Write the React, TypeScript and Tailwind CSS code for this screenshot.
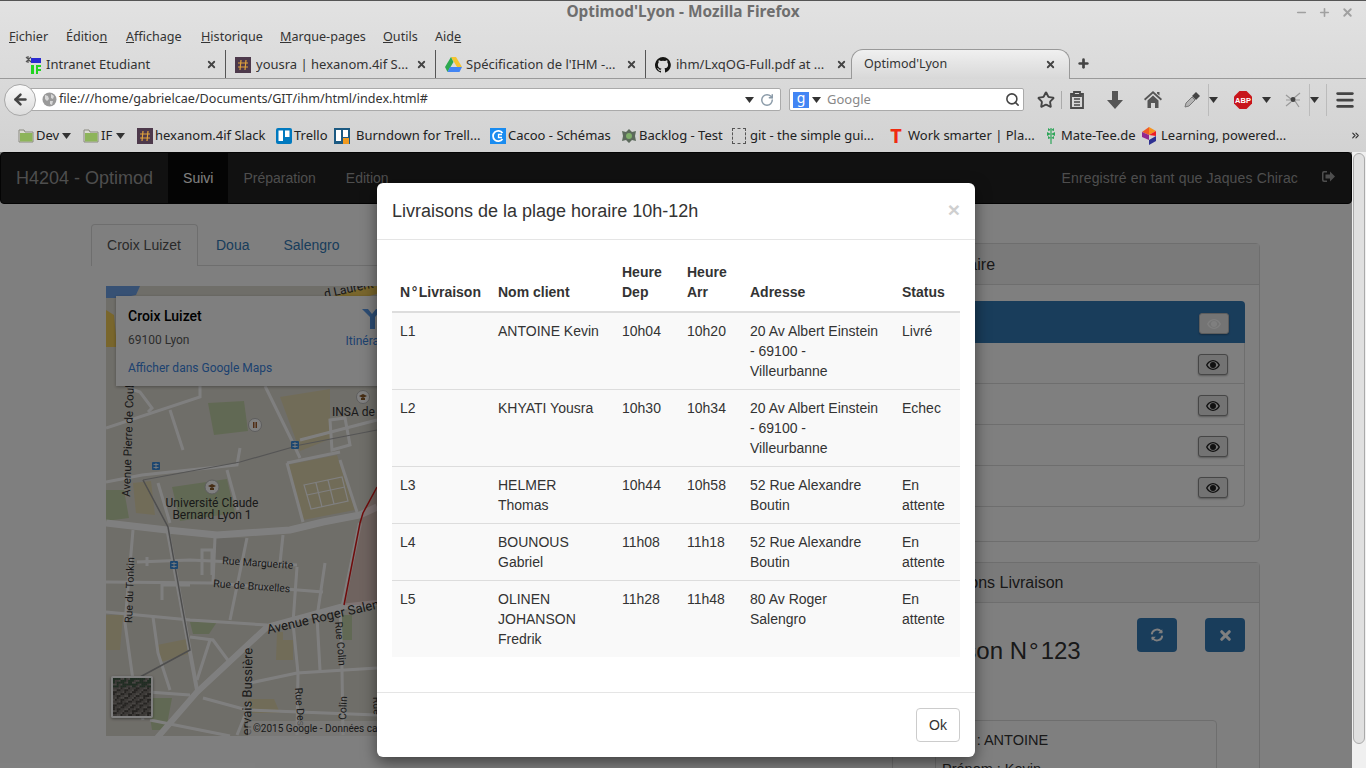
import { Search, Star, Plus, X, Minus, ArrowLeft, RotateCw, Menu, ChevronsRight } from 'lucide-react';

const chromeFont = "font-['Noto_Sans','Open_Sans',sans-serif]";

// ---- little drawn icons ----
function Caret({ className = 'text-[#333]' }: { className?: string }) {
  return (
    <svg width="9" height="6" viewBox="0 0 9 6" className={`shrink-0 ${className}`}>
      <path d="M0 0h9L4.5 6z" fill="currentColor" />
    </svg>
  );
}

function Hash({ size = 16 }: { size?: number }) {
  return (
    <svg width={size} height={size} viewBox="0 0 16 16" className="shrink-0">
      <rect width="16" height="16" fill="#4d394b" />
      <path d="M6 3 5 13M11 3l-1 10M3 6h10M3 10h10" stroke="#e0a23c" strokeWidth="1.2" />
    </svg>
  );
}

function Folder() {
  return (
    <svg width="16" height="15" viewBox="0 0 16 15" className="shrink-0">
      <path d="M1 2h5l1 2h8v10H1z" fill="#dcdcd4" stroke="#8a8a80" />
      <rect x="2" y="5" width="12.5" height="8.5" fill="#8db45a" />
    </svg>
  );
}

function Intranet() {
  return (
    <svg width="18" height="20" viewBox="0 0 18 20" className="shrink-0">
      <path d="M2 2l5 5M7 2 2 7M4 1v7" stroke="#555" strokeWidth="1.2" />
      <rect x="7" y="3" width="10" height="5" fill="#2a2ad0" />
      <rect x="7" y="10" width="3" height="9" fill="#22d422" />
      <path d="M12 10h5v2h-3v2h3v2h-3v3h-2z" fill="#22d422" />
    </svg>
  );
}

function Drive() {
  return (
    <svg width="17" height="15" viewBox="0 0 17 15" className="shrink-0">
      <path d="M6 0h5l6 10h-5z" fill="#f4c430" />
      <path d="M6 0 0 10l2.5 5L8.500 5z" fill="#2da94f" />
      <path d="M5 10h12l-2.500 5h-12z" fill="#4285f4" />
    </svg>
  );
}

function Github() {
  return (
    <svg width="16" height="16" viewBox="0 0 16 16" className="shrink-0">
      <path
        fill="#161614"
        d="M8 0a8 8 0 0 0-2.500 15.600c.4.100.500-.200.500-.400v-1.400c-2.200.500-2.700-1-2.700-1-.400-.900-.900-1.200-.900-1.200-.700-.500.100-.500.100-.500.800.100 1.200.800 1.200.800.700 1.200 1.900.900 2.300.700.100-.500.300-.900.500-1.100-1.800-.200-3.600-.900-3.600-4 0-.900.300-1.600.800-2.100-.100-.200-.400-1 .100-2.100 0 0 .700-.200 2.200.800a7.600 7.600 0 0 1 4 0c1.500-1 2.200-.800 2.200-.800.400 1.100.200 1.900.100 2.100.500.600.800 1.300.800 2.100 0 3.100-1.900 3.700-3.700 3.900.300.300.600.800.600 1.500v2.200c0 .200.100.500.600.400A8 8 0 0 0 8 0z"
      />
    </svg>
  );
}

function Trello() {
  return (
    <svg width="16" height="16" viewBox="0 0 16 16" className="shrink-0">
      <rect width="16" height="16" rx="2" fill="#0079bf" />
      <rect x="2.500" y="2.500" width="4.500" height="10.500" fill="#fff" />
      <rect x="9" y="2.500" width="4.500" height="6.500" fill="#fff" />
    </svg>
  );
}

function Burndown() {
  return (
    <svg width="16" height="16" viewBox="0 0 16 16" className="shrink-0">
      <rect width="16" height="16" fill="#1c5a82" />
      <rect x="2" y="2" width="5" height="11" fill="#fff" />
      <rect x="9" y="2" width="5" height="7" fill="#fff" />
      <rect x="9" y="10" width="6" height="6" fill="#f09a20" />
    </svg>
  );
}

function Cacoo() {
  return (
    <svg width="16" height="16" viewBox="0 0 16 16" className="shrink-0">
      <rect width="16" height="16" fill="#1a8cf0" />
      <path d="M12.500 5A5.200 5.200 0 1 0 12.500 11" fill="none" stroke="#fff" strokeWidth="1.800" />
      <path d="M12 6.500H8.500v3H12" fill="none" stroke="#fff" strokeWidth="1.300" />
    </svg>
  );
}

function Backlog() {
  return (
    <svg width="16" height="16" viewBox="0 0 16 16" className="shrink-0">
      <path d="M8 1l3 3 4-1-1 5 1 5-4-1-3 3-3-3-4 1 1-5-1-5 4 1z" fill="#5c6a5c" />
      <circle cx="8" cy="8" r="3" fill="#7fae6a" />
    </svg>
  );
}

function MateLeaf() {
  return (
    <svg width="10" height="18" viewBox="0 0 10 18" className="shrink-0">
      <path d="M5 1v16" stroke="#2fa55a" strokeWidth="1.200" />
      <path d="M5 3 2 1v3zM5 3l3-2v3zM5 7 1 5v4zM5 7l4-2v4zM5 11 2 9v3zM5 11l3-2v3z" fill="#2fa55a" />
    </svg>
  );
}

function LearningLogo() {
  return (
    <svg width="14" height="18" viewBox="0 0 14 18" className="shrink-0">
      <path d="M7 0l7 4-7 4z" fill="#f7931e" />
      <path d="M0 5l7-5v8z" fill="#f15a24" />
      <path d="M7 8l7-4v5z" fill="#ed1c24" />
      <path d="M0 5l7 3v5l-7-3z" fill="#92278f" />
      <path d="M7 13l7-4v5l-7 4z" fill="#2e3192" />
    </svg>
  );
}

function EyeIcon({ className = 'text-[#333]' }: { className?: string }) {
  return (
    <svg width="14" height="10" viewBox="0 0 14 10" className={className}>
      <path
        fillRule="evenodd"
        fill="currentColor"
        d="M7 0c3.200 0 5.800 2.200 7 5-1.200 2.800-3.800 5-7 5S1.200 7.800 0 5c1.200-2.800 3.800-5 7-5zM7 1.200C4.800 1.200 2.800 2.800 1.500 5c1.300 2.200 3.300 3.800 5.500 3.800S11.200 7.200 12.500 5C11.200 2.800 9.200 1.200 7 1.200zM7 2a3 3 0 1 1 0 6 3 3 0 0 1 0-6z"
      />
    </svg>
  );
}

function LogoutIcon() {
  return (
    <svg width="13" height="11" viewBox="0 0 13 11" className="text-[#9d9d9d]">
      <path d="M5 0H2a2 2 0 0 0-2 2v7a2 2 0 0 0 2 2h3V9.500H2.500a1 1 0 0 1-1-1v-6a1 1 0 0 1 1-1H5z" fill="currentColor" />
      <path d="M8 .5 13 5.500 8 10.500V7.500H3.500v-4H8z" fill="currentColor" />
    </svg>
  );
}

function RefreshIcon() {
  return (
    <svg width="14" height="14" viewBox="0 0 24 24" fill="none" stroke="#fff" strokeWidth="3.200">
      <path d="M3 11a9 9 0 0 1 16-5l2 2M21 13a9 9 0 0 1-16 5l-2-2" />
      <path d="M21 2v7h-7M3 22v-7h7" fill="#fff" stroke="none" />
    </svg>
  );
}

function Clipboard() {
  return (
    <svg width="16" height="18" viewBox="0 0 16 18" className="text-[#4a4a4a]">
      <path d="M5 1h6v3H5z M2 3h2v2h8V3h2v14H2z" fill="none" stroke="currentColor" strokeWidth="1.800" />
      <path d="M5 8h6M5 11h6M5 14h6" stroke="currentColor" strokeWidth="1.500" />
    </svg>
  );
}

function DownloadArrow() {
  return (
    <svg width="16" height="18" viewBox="0 0 16 18" className="text-[#555]">
      <path d="M5 0h6v9h5l-8 9-8-9h5z" fill="currentColor" />
    </svg>
  );
}

function HomeIcon() {
  return (
    <svg width="18" height="17" viewBox="0 0 18 17" className="text-[#555]">
      <path d="M9 0l9 8-1.200 1.400L9 2.500 1.200 9.400 0 8zM13 1h2.500v3.500L13 2.500z" fill="currentColor" />
      <path d="M3.500 9.500 9 4.500l5.500 5V17H11v-5H7v5H3.500z" fill="currentColor" />
    </svg>
  );
}

function Dropper() {
  return (
    <svg width="18" height="18" viewBox="0 0 18 18">
      <path d="M2 16l1-4 6-6 3 3-6 6z" fill="#b4b4b4" stroke="#777" />
      <path d="M9 5l4-4 4 4-4 4z" fill="#444" />
    </svg>
  );
}

function Abp() {
  return (
    <svg width="18" height="18" viewBox="0 0 18 18">
      <path d="M5.500 0h7L18 5.500v7L12.500 18h-7L0 12.500v-7z" fill="#c8151b" />
      <text x="9" y="12" textAnchor="middle" fontSize="7.500" fontWeight="700" fill="#fff" fontFamily="Liberation Sans, sans-serif">
        ABP
      </text>
    </svg>
  );
}

function Spider() {
  return (
    <svg width="16" height="16" viewBox="0 0 16 16">
      <path d="M1 3l5 4M15 1 9 6M1 14l5-4M14 15l-4-6M1 8h4M15 8h-4" stroke="#999" strokeWidth="1.200" />
      <circle cx="8" cy="7.500" r="2.500" fill="#444" />
    </svg>
  );
}

// ---- browser chrome ----
function MenuLabel({ before, mark, after, className }: { before: string; mark: string; after: string; className: string }) {
  return (
    <span className={className}>
      {before}
      <span className="underline">{mark}</span>
      {after}
    </span>
  );
}

function BrowserTab({ icon, label }: { icon: React.ReactNode; label: string }) {
  return (
    <div className="flex h-full w-[210px] items-center border-r border-[#555] pt-[1px] pr-[8px] pl-[6px]">
      <div className="flex w-[22px] justify-center">{icon}</div>
      <span className="ml-[2px] flex-1 truncate text-[13px] text-[#333]">{label}</span>
      <X size={11} strokeWidth={4} className="ml-[6px] text-[#444]" />
    </div>
  );
}

function Bookmark({ className, icon, label }: { className: string; icon: React.ReactNode; label: string }) {
  return (
    <div className={`flex shrink-0 items-center gap-[2px] whitespace-nowrap text-[13px] text-[#222] ${className}`}>
      {icon}
      <span>{label}</span>
    </div>
  );
}

function BrowserChrome() {
  return (
    <div className={`${chromeFont} h-[152px] shrink-0 border-t border-[#555] bg-gradient-to-b from-[#e2e2e2] to-[#d2d2d2]`}>
      {/* title bar */}
      <div className="flex h-[22px] items-center">
        <div className="flex-1 pl-[246px] text-center text-[15.400px] font-bold text-[#6e6e6e]">Optimod'Lyon - Mozilla Firefox</div>
        <div className="flex w-[246px] items-center justify-end gap-[10px] pr-[12px] text-[#a0a0a0]">
          <Minus size={13} strokeWidth={3} />
          <Plus size={13} strokeWidth={3} />
          <X size={13} strokeWidth={3.500} />
        </div>
      </div>
      {/* menu */}
      <div className="flex h-[26px] items-center pt-[2px] pl-[9px] text-[12.600px] text-[#333]">
        <MenuLabel className="w-[57px]" before="" mark="F" after="ichier" />
        <MenuLabel className="w-[60px]" before="Éditio" mark="n" after="" />
        <MenuLabel className="w-[75px]" before="" mark="A" after="ffichage" />
        <MenuLabel className="w-[79px]" before="" mark="H" after="istorique" />
        <MenuLabel className="w-[103px]" before="" mark="M" after="arque-pages" />
        <MenuLabel className="w-[52px]" before="" mark="O" after="utils" />
        <MenuLabel className="" before="Aid" mark="e" after="" />
      </div>
      {/* tabs */}
      <div className="flex h-[30px] items-stretch border-b border-[#999] pl-[16px]">
        <div className="flex h-[28px] self-end">
          <BrowserTab icon={<Intranet />} label="Intranet Etudiant" />
          <BrowserTab icon={<Hash />} label="yousra | hexanom.4if S..." />
          <BrowserTab icon={<Drive />} label="Spécification de l'IHM -..." />
          <div className="flex h-full w-[205px] items-center pt-[1px] pr-[4px] pl-[6px]">
            <div className="flex w-[22px] justify-center">
              <Github />
            </div>
            <span className="ml-[2px] flex-1 truncate text-[13px] text-[#333]">ihm/LxqOG-Full.pdf at ...</span>
            <X size={11} strokeWidth={4} className="ml-[6px] text-[#444]" />
          </div>
        </div>
        <div className="z-10 -mb-px flex h-[30px] w-[219px] items-center rounded-t-[12px] border border-b-0 border-[#999] bg-gradient-to-b from-[#f0f0f0] to-[#d8d8d8] pr-[13px] pl-[12px]">
          <span className="flex-1 text-[12.500px] text-[#333]">Optimod'Lyon</span>
          <X size={11} strokeWidth={4} className="text-[#444]" />
        </div>
        <div className="flex items-center pl-[7px]">
          <Plus size={13} strokeWidth={5} className="text-[#444]" />
        </div>
      </div>
      {/* navigation */}
      <div className="flex h-[41px] items-center pl-[4px]">
        <div className="z-10 flex h-[32px] w-[32px] shrink-0 items-center justify-center rounded-full border border-[#a8a8a8] bg-gradient-to-b from-[#fafafa] to-[#dcdcdc] text-[#444]">
          <ArrowLeft size={17} strokeWidth={3.500} />
        </div>
        <div className="-ml-[6px] flex h-[23px] w-[751px] items-center rounded-r-[2px] border border-[#aaa] bg-white pr-[4px] pl-[11px]">
          <svg width="15" height="15" viewBox="0 0 15 15" className="shrink-0">
            <circle cx="7.500" cy="7.500" r="7" fill="#9a9a9a" />
            <path d="M3 3l3 1 1 3-2 2-2-2zM9 2l3 2-1 3-2-1zM8 9l3 0-1 4-2-1z" fill="#d8d8d8" />
          </svg>
          <span className="ml-[2px] flex-1 text-[12.600px] text-[#333]">file:///home/gabrielcae/Documents/GIT/ihm/html/index.html#</span>
          <Caret />
          <RotateCw size={14} strokeWidth={2.500} className="mr-[2px] ml-[6px] text-[#8a9aa8]" />
        </div>
        <div className="ml-[8px] flex h-[23px] w-[235px] shrink-0 items-center rounded-[2px] border border-[#aaa] bg-white pr-[3px] pl-[3px]">
          <div className="flex h-[16px] w-[16px] items-center justify-center bg-[#4285f4] pb-[3px] text-[14px] leading-none text-white">g</div>
          <Caret className="ml-[3px] text-[#333]" />
          <span className="ml-[6px] flex-1 text-[13px] text-[#888]">Google</span>
          <Search size={15} strokeWidth={2.500} className="text-[#444]" />
        </div>
        <div className="ml-[6px] flex w-[32px] justify-center border-r border-[#aaa]">
          <Star size={18} strokeWidth={2.500} className="text-[#444]" />
        </div>
        <div className="flex w-[30px] justify-center">
          <Clipboard />
        </div>
        <div className="ml-[4px] flex w-[38px] justify-center">
          <DownloadArrow />
        </div>
        <div className="flex w-[38px] justify-center">
          <HomeIcon />
        </div>
        <div className="ml-[4px] flex w-[32px] justify-center">
          <Dropper />
        </div>
        <div className="flex h-[32px] w-[10px] items-center justify-center border-l border-[#bbb]">
          <Caret />
        </div>
        <div className="ml-[7px] flex w-[36px] justify-center">
          <Abp />
        </div>
        <div className="flex w-[10px] justify-center">
          <Caret />
        </div>
        <div className="ml-[6px] flex w-[32px] justify-center">
          <Spider />
        </div>
        <div className="flex h-[32px] w-[10px] items-center justify-center border-l border-[#bbb]">
          <Caret />
        </div>
        <div className="ml-[7px] flex h-[32px] w-[36px] items-center justify-center border-l border-[#bbb]">
          <Menu size={22} strokeWidth={3} className="text-[#444]" />
        </div>
      </div>
      {/* bookmarks */}
      <div className="flex h-[30px] items-center pt-[1px] pl-[18px]">
        <Bookmark className="w-[65px]" icon={<Folder />} label="Dev" />
        <div className="-ml-[21px] w-[21px] shrink-0">
          <Caret />
        </div>
        <Bookmark className="w-[54px]" icon={<Folder />} label="IF" />
        <div className="-ml-[21px] w-[21px] shrink-0">
          <Caret />
        </div>
        <Bookmark className="w-[139px]" icon={<Hash />} label="hexanom.4if Slack" />
        <Bookmark className="w-[58px]" icon={<Trello />} label="Trello" />
        <Bookmark className="w-[156px] gap-[6px]" icon={<Burndown />} label="Burndown for Trell..." />
        <Bookmark className="w-[131px]" icon={<Cacoo />} label="Cacoo - Schémas" />
        <Bookmark className="w-[111px]" icon={<Backlog />} label="Backlog - Test" />
        <Bookmark
          className="w-[157px] gap-[4px]"
          icon={<span className="h-[16px] w-[14px] shrink-0 border border-dashed border-[#555]" />}
          label="git - the simple gui..."
        />
        <Bookmark
          className="w-[157px] gap-[5px]"
          icon={<span className="flex w-[14px] shrink-0 justify-center text-[20px] leading-none font-bold text-[#f02a10]">T</span>}
          label="Work smarter | Pla..."
        />
        <Bookmark className="w-[96px] gap-[5px]" icon={<MateLeaf />} label="Mate-Tee.de" />
        <Bookmark className="w-[200px] gap-[5px]" icon={<LearningLogo />} label="Learning, powered..." />
        <ChevronsRight size={11} strokeWidth={2.500} className="ml-[8px] text-[#333]" />
      </div>
    </div>
  );
}

// ---- map ----
function TransitMark({ x, y }: { x: number; y: number }) {
  return (
    <g>
      <rect x={x - 4} y={y - 4} width="8" height="8" rx="1" fill="#3b8ee0" />
      <path d={`M${x - 2.500} ${y - 1.500}h5M${x - 2.500} ${y + 1.500}h5M${x} ${y - 3}v6`} stroke="#fff" strokeWidth="0.800" />
    </g>
  );
}

function MapDrawing() {
  const minor = [
    'M106 428 L200 397 L200 386',
    'M128 388 L140 392 L152 408 L148 412',
    'M170 410 L183 450',
    'M265 386 L293 443 L300 458',
    'M330 420 L345 418 L350 445 L332 450 Z',
    'M300 440 L377 420',
    'M106 482 L142 475 L237 465 L240 448',
    'M158 483 L170 523',
    'M227 470 L238 510',
    'M287 463 L303 522',
    'M340 460 L357 512',
    'M287 463 L340 452',
    'M133 530 L125 623 L133 680 L143 720',
    'M106 582 L212 583 L323 592',
    'M137 562 L190 560 L297 565',
    'M215 537 L213 583',
    'M247 538 L230 620',
    'M283 535 L280 563',
    'M297 567 L293 623 L298 673 L297 735',
    'M325 563 L317 617 L320 670',
    'M106 612 L190 620 L267 625',
    'M340 607 L342 670 L343 735',
    'M250 683 L297 673 L377 668',
    'M203 698 L247 710 L377 715',
    'M190 637 L213 640 L230 663',
    'M210 640 L197 680',
    'M153 617 L158 653 L170 690',
    'M120 690 L190 695',
    'M250 703 L237 735',
    'M202 575 L202 550 L212 550 L212 575',
    'M162 600 L162 585 L190 585',
    'M147 557 L147 566',
    'M150 720 L230 736',
  ];

  return (
    <svg viewBox="106 286 770 450" className="block h-[450px] w-[770px] bg-[#dfdcd2]">
      {/* parks and blocks */}
      <path d="M106 490h18l5 28-23 3z" fill="#c3d3a8" />
      <path d="M172 487l55-8 8 34-55 8z" fill="#c3d3a8" />
      <path d="M208 403l36-2 4 30-34 4z" fill="#c3d3a8" />
      <path d="M190 622h27l-8 12h-16zM342 615h10v25h-10zM147 698h25l-6 32h-14z" fill="#c3d3a8" />
      <path d="M133 483l18-2 4 34-19-2zM287 465l50-10 18 55-52 10zM280 397l50-8v50l-30 12zM106 615h17l-3 35h-14zM157 645l30-6 1 15-27 8zM277 632h6v8h10v20h-17zM248 699h26l6 14h-32z" fill="#e3d8b0" />
      <path d="M215 538h30l-1 22h-29z" fill="#d2d0c8" />
      <path d="M304 485l38-8 6 24-37 8zM316 483l6 24M328 480l6 24M307 495l38-8" fill="none" stroke="#fff" strokeWidth="1.200" />
      <path d="M106 286h34l-4 9-15 3h-15z" fill="#6ea2e8" />
      <path d="M106 310l8 5 3 32h-11z" fill="#f2cc58" />
      <path d="M318 300l59-16v10l-55 14z" fill="#f2cc58" />
      {/* minor streets */}
      {minor.map((d) => (
        <path key={d} d={d} fill="none" stroke="#fff" strokeWidth="3" />
      ))}
      {/* major streets */}
      <path d="M167 527 L197 690" fill="none" stroke="#fff" strokeWidth="4" />
      <path d="M106 523 L167 530 L217 535 L290 530 L323 522 L360 515 L377 507" fill="none" stroke="#fff" strokeWidth="7" />
      <path d="M157 738 L197 692 L267 627 L340 607 L377 603" fill="none" stroke="#fff" strokeWidth="6" />
      <path d="M360 523 L343 605" fill="none" stroke="#fff" strokeWidth="4" />
      <path d="M143 480 L168 527 L190 650 L140 677" fill="none" stroke="#9c9c9c" strokeWidth="1.500" />
      <path d="M143 480 L240 462 L300 445 L377 430" fill="none" stroke="#aaa" strokeWidth="1.200" />
      {/* route */}
      <path d="M377 487 L363 513 L360 523 L344 605 L377 605z" fill="#e01818" fillOpacity="0.1" />
      <path d="M377 487 L363 513 L360 523 L344 605" fill="none" stroke="#e01818" strokeWidth="1.500" />
      {/* pois */}
      <circle cx="212" cy="487" r="7" fill="#fff" stroke="#bbb" />
      <path d="M208 486l4-2 4 2-4 2zM210 488h4v2h-4z" fill="#8a5a2a" />
      <circle cx="255" cy="425" r="6.500" fill="#fff" stroke="#bbb" />
      <path d="M253 422h1.500v6H253zM255.500 422h1.500v6h-1.500z" fill="#a05a2a" />
      <circle cx="363" cy="397" r="6.500" fill="#fff" stroke="#bbb" />
      <path d="M359 396l4-2 4 2-4 2zM361 398h4v2h-4z" fill="#8a5a2a" />
      <TransitMark x={156} y={466} />
      <TransitMark x={174} y={565} />
      <TransitMark x={295} y={445} />
      {/* labels */}
      <g fontFamily="Roboto, sans-serif" fontSize="10.500" fill="#333">
        <text x="212" y="507" fontSize="12" textAnchor="middle">Université Claude</text>
        <text x="212" y="519" fontSize="12" textAnchor="middle">Bernard Lyon 1</text>
        <text x="332" y="416" fontSize="12">INSA de Lyon</text>
        <text transform="translate(222 564) rotate(4)">Rue Marguerite</text>
        <text transform="translate(213 587) rotate(4)">Rue de Bruxelles</text>
        <text transform="translate(132 623) rotate(-88)">Rue du Tonkin</text>
        <text transform="translate(130 497) rotate(-88)" fontSize="11.500">Avenue Pierre de Coubertin</text>
        <text transform="translate(268 634) rotate(-13)" fontSize="13">Avenue Roger Salengro</text>
        <text transform="translate(335 622) rotate(85)">Rue Colin</text>
        <text transform="translate(250 790) rotate(-89)" fontSize="13">Avenue Gervais Bussière</text>
        <text transform="translate(295 688) rotate(86)">Rue Des</text>
        <text transform="translate(346 720) rotate(-88)">Colin</text>
        <text transform="translate(373 697) rotate(88)">Rue</text>
        <text transform="translate(325 298) rotate(-12)" fontSize="12">d Laurent</text>
      </g>
    </svg>
  );
}

function SatelliteThumb() {
  const cells = Array.from({ length: 400 }, (_, i) => (i * 37 + (i % 7) * 53 + (i % 11) * 29) % 100);
  return (
    <svg viewBox="0 0 40 40" className="block h-full w-full bg-[#6f6c68]">
      {cells.map((v, i) => (
        <rect
          key={i}
          x={(i % 20) * 2}
          y={Math.floor(i / 20) * 2}
          width="2"
          height="2"
          fill={i < 100 && v < 60 ? '#3f5a44' : v < 35 ? '#4a4642' : v < 75 ? '#7a7570' : '#938d88'}
        />
      ))}
    </svg>
  );
}

function MapPanel() {
  return (
    <div className="relative mx-[15px] mt-[20px] h-[450px] overflow-hidden font-['Roboto',sans-serif]">
      <MapDrawing />
      {/* info card */}
      <div className="absolute top-[10px] left-[10px] h-[90px] w-[300px] bg-white px-[12px] pt-[10px] shadow-[0_1px_3px_rgba(0,0,0,0.3)]">
        <div className="flex justify-between">
          <div>
            <div className="text-[14px] leading-[20px] font-medium text-black">Croix Luizet</div>
            <div className="mt-[5px] text-[12px] leading-[18px] text-[#5b5b5b]">69100 Lyon</div>
          </div>
          <div className="flex w-[64px] flex-col items-center pt-[2px]">
            <svg width="22" height="22" viewBox="0 0 22 22">
              <path d="M1 1l8 8v12h5V9l7-8h-6l-4 5-4-5z" fill="#5a9ae8" />
            </svg>
            <div className="mt-[2px] text-[12px] text-[#3a84df]">Itinéraires</div>
          </div>
        </div>
        <div className="mt-[9px] text-[12px] text-[#3a84df]">Afficher dans Google Maps</div>
      </div>
      {/* satellite toggle */}
      <div className="absolute bottom-[18px] left-[5px] h-[42px] w-[42px] overflow-hidden rounded-[2px] border-2 border-white shadow-[0_1px_3px_rgba(0,0,0,0.4)]">
        <SatelliteThumb />
      </div>
      <div className="absolute right-0 bottom-0 left-[142px] h-[15px] bg-white/60 pl-[5px] text-[10px] leading-[15px] text-[#333]">
        ©2015 Google - Données cartographiques ©2015 Google
      </div>
    </div>
  );
}

// ---- page behind the modal ----
function SlotRow({ active, className }: { active?: boolean; className: string }) {
  return (
    <div
      className={`flex items-center justify-end pr-[16px] ${className} ${
        active ? 'bg-[#337ab7]' : 'border-x border-b border-[#ddd] bg-white'
      }`}
    >
      <div
        className={`mt-[3px] flex h-[21px] w-[30px] items-center justify-center rounded-[3px] border shadow-[0_1px_2px_rgba(0,0,0,0.3)] ${
          active ? 'border-[#bbb] bg-[#e8e8e8]' : 'border-[#8c8c8c] bg-[#e6e6e6]'
        }`}
      >
        <EyeIcon className={active ? 'text-white' : 'text-[#222]'} />
      </div>
    </div>
  );
}

function Page() {
  return (
    <div className="h-full overflow-hidden bg-white font-['Liberation_Sans',sans-serif] text-[14px] text-[#333]">
      {/* navbar */}
      <div className="flex h-[52px] items-center rounded-[4px] border border-[#080808] bg-[#222] text-[#9d9d9d]">
        <span className="pl-[15px] text-[18px]">H4204 - Optimod</span>
        <span className="ml-[15px] flex h-full items-center bg-[#080808] px-[15px] text-white">Suivi</span>
        <span className="ml-[15px]">Préparation</span>
        <span className="ml-[30px]">Edition</span>
        <span className="ml-auto tracking-[0.15px]">Enregistré en tant que Jaques Chirac</span>
        <span className="mr-[16px] ml-[24px] -mt-[4px]">
          <LogoutIcon />
        </span>
      </div>

      <div className="flex pl-[91px]">
        {/* left column */}
        <div className="mt-[20px] w-[785px] shrink-0">
          <div className="flex h-[42px] border-b border-[#ddd]">
            <div className="-mb-px flex h-[42px] w-[107px] items-center justify-center rounded-t-[4px] border border-b-0 border-[#ddd] bg-white pr-[1px] text-[#555]">
              Croix Luizet
            </div>
            <div className="ml-[18px] flex items-center pt-[1px] text-[#337ab7]">Doua</div>
            <div className="ml-[34px] flex items-center pt-[1px] text-[#337ab7]">Salengro</div>
          </div>
          <MapPanel />
        </div>

        {/* right column */}
        <div className="mt-[39px] ml-[16px] w-[368px] shrink-0">
          <div className="h-[299px] rounded-[4px] border border-[#ddd]">
            <div className="flex h-[41px] items-center border-b border-[#ddd] bg-[#f5f5f5] pt-[2px] pl-[14px] text-[16px]">Liste horaire</div>
            <div className="mt-[16px] ml-[14px] w-[338px]">
              <SlotRow active className="h-[42px] rounded-t-[4px]" />
              <SlotRow className="h-[41px]" />
              <SlotRow className="h-[41px]" />
              <SlotRow className="h-[41px]" />
              <SlotRow className="h-[41px] rounded-b-[4px]" />
            </div>
          </div>
          <div className="mt-[20px] rounded-[4px] border border-[#ddd]">
            <div className="flex h-[40px] items-center border-b border-[#ddd] bg-[#f5f5f5] pl-[14px] text-[16px]">Informations Livraison</div>
            <div className="flex justify-between pt-[15px] pr-[14px] pl-[14px]">
              <div className="mt-[16px] text-[24px] leading-[34px]">
                Livraison N<span className="mx-[2px]">°</span>123
              </div>
              <div className="flex gap-[28px]">
                <div className="flex h-[34px] w-[40px] items-center justify-center rounded-[4px] bg-[#337ab7]">
                  <RefreshIcon />
                </div>
                <div className="flex h-[34px] w-[40px] items-center justify-center rounded-[4px] bg-[#337ab7]">
                  <X size={15} strokeWidth={5} className="text-white" />
                </div>
              </div>
            </div>
            <div className="mt-[52px] ml-[42px] h-[80px] w-[282px] rounded-[4px] border border-[#ddd] pt-[8px] pl-[6px] text-[14.500px] leading-[22px]">
              <div>Nom : ANTOINE</div>
              <div className="mt-[7px]">Prénom : Kevin</div>
            </div>
          </div>
        </div>
      </div>
    </div>
  );
}

// ---- modal ----
const rows = [
  { id: 'L1', client: 'ANTOINE Kevin', dep: '10h04', arr: '10h20', addr: '20 Av Albert Einstein - 69100 - Villeurbanne', status: 'Livré' },
  { id: 'L2', client: 'KHYATI Yousra', dep: '10h30', arr: '10h34', addr: '20 Av Albert Einstein - 69100 - Villeurbanne', status: 'Echec' },
  { id: 'L3', client: 'HELMER Thomas', dep: '10h44', arr: '10h58', addr: '52 Rue Alexandre Boutin', status: 'En attente' },
  { id: 'L4', client: 'BOUNOUS Gabriel', dep: '11h08', arr: '11h18', addr: '52 Rue Alexandre Boutin', status: 'En attente' },
  { id: 'L5', client: 'OLINEN JOHANSON Fredrik', dep: '11h28', arr: '11h48', addr: '80 Av Roger Salengro', status: 'En attente' },
];

function DeliveriesModal() {
  return (
    <div className="absolute inset-0 bg-black/50">
      <div className="mx-auto mt-[31px] w-[598px] rounded-[6px] bg-white font-['Liberation_Sans',sans-serif] text-[14px] text-[#333] shadow-[0_5px_15px_rgba(0,0,0,0.5)]">
        <div className="flex h-[57px] items-center justify-between border-b border-[#e5e5e5] px-[15px]">
          <h4 className="text-[18px]">Livraisons de la plage horaire 10h-12h</h4>
          <span className="-mt-[4px] text-[21px] leading-none font-bold text-[#cfcfcf]">×</span>
        </div>
        <div className="p-[15px] pb-[35px]">
          <table className="w-full table-fixed border-collapse leading-[20px]">
            <thead>
              <tr className="border-b-2 border-[#ddd] text-left align-bottom font-bold">
                <th className="w-[98px] px-[8px] pt-[7px] pb-[9px] whitespace-nowrap">
                  N<span className="mx-[1.500px]">°</span>Livraison
                </th>
                <th className="w-[124px] px-[8px] pt-[7px] pb-[9px]">Nom client</th>
                <th className="w-[65px] px-[8px] pt-[7px] pb-[9px]">Heure Dep</th>
                <th className="w-[63px] px-[8px] pt-[7px] pb-[9px]">Heure Arr</th>
                <th className="w-[152px] px-[8px] pt-[7px] pb-[9px]">Adresse</th>
                <th className="w-[66px] px-[8px] pt-[7px] pb-[9px]">Status</th>
              </tr>
            </thead>
            <tbody>
              {rows.map((row, i) => (
                <tr key={row.id} className={`align-top ${i < 4 ? 'border-b' : ''} border-[#ddd] bg-[#f9f9f9]`}>
                  <td className="p-[8px]">{row.id}</td>
                  <td className="p-[8px]">{row.client}</td>
                  <td className="p-[8px]">{row.dep}</td>
                  <td className="p-[8px]">{row.arr}</td>
                  <td className="p-[8px]">{row.addr}</td>
                  <td className="p-[8px]">{row.status}</td>
                </tr>
              ))}
            </tbody>
          </table>
        </div>
        <div className="flex justify-end border-t border-[#e5e5e5] p-[15px]">
          <button className="h-[34px] rounded-[4px] border border-[#ccc] bg-white px-[12px] text-[#333]">Ok</button>
        </div>
      </div>
    </div>
  );
}

export default function App() {
  return (
    <div className="flex h-[768px] w-[1366px] flex-col overflow-hidden bg-white">
      <BrowserChrome />
      <div className="flex min-h-0 flex-1">
        <div className="relative w-[1352px] shrink-0 overflow-hidden">
          <Page />
          <DeliveriesModal />
        </div>
        {/* scrollbar */}
        <div className="flex-1 bg-[#f0f0f0] px-[1px] pt-[1px]">
          <div className="h-[591px] rounded-[6px] border border-[#aaa] bg-[#e0e0e0]" />
        </div>
      </div>
    </div>
  );
}
